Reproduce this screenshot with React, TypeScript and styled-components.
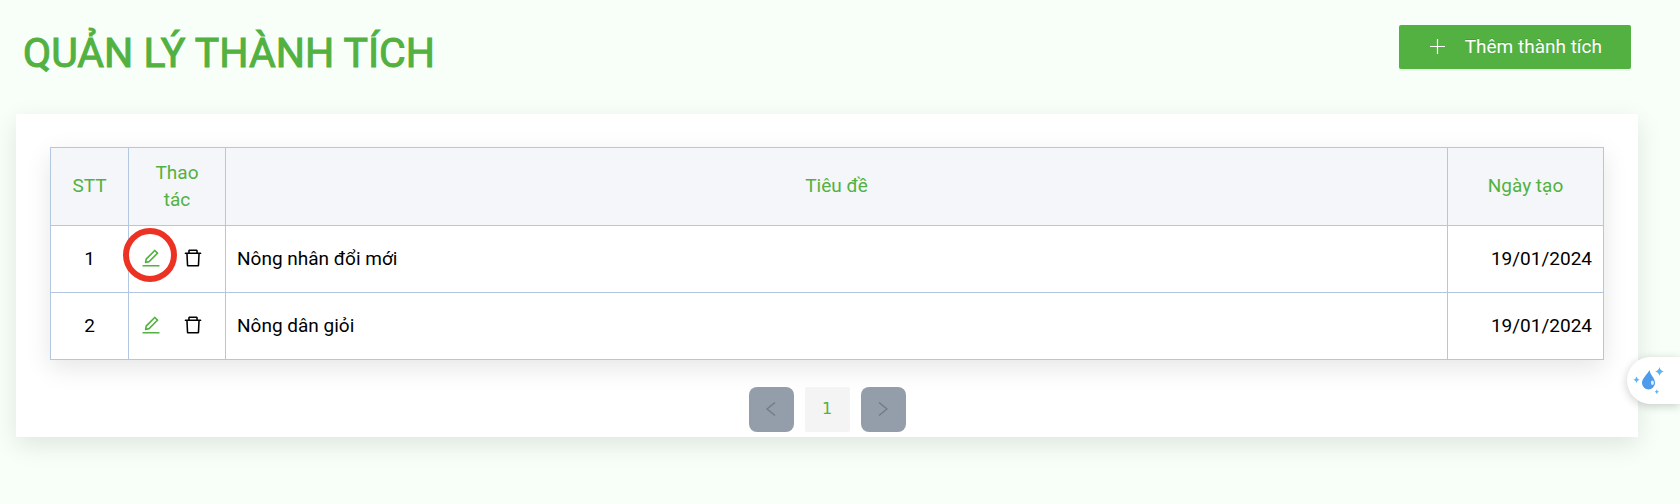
import React from "react";
import styled, { createGlobalStyle } from "styled-components";
import { AiOutlineDelete, AiOutlineEdit } from "react-icons/ai";

const green = "#52b141";
const line = "#b4c7e0";

const GlobalStyle = createGlobalStyle`
  *, *::before, *::after { box-sizing: border-box; }
  html { background: #f8fff9; }
  body {
    margin: 0;
    font-family: Roboto, "Liberation Sans", sans-serif;
    font-size: 19px;
    line-height: 27px;
    color: #000;
  }
  button { font: inherit; cursor: pointer; }
`;

const Page = styled.main`
  padding: 25px 42px 66px 16px;
`;

const Header = styled.header`
  display: flex;
  justify-content: space-between;
  align-items: flex-start;
  padding: 0 7px;
  margin-bottom: 33px;
`;

const Title = styled.h1`
  margin: 0;
  font-size: 41px;
  line-height: 56px;
  font-weight: 400;
  color: ${green};
  -webkit-text-stroke: 1px ${green};
`;

const AddButton = styled.button`
  display: flex;
  align-items: center;
  gap: 20px;
  height: 44px;
  padding: 0 29px 1px 31px;
  border: 0;
  border-radius: 2px;
  background: ${green};
  color: #fff;
  box-shadow: 0 2px 0 rgba(0, 0, 0, 0.05);
  text-shadow: 0 -1px 0 rgba(0, 0, 0, 0.12);
  white-space: nowrap;
`;

const Card = styled.section`
  padding: 33px 34px 5px;
  background: #fff;
  box-shadow: 0 8px 24px rgba(0, 0, 0, 0.1);
`;

const Table = styled.table`
  width: 100%;
  table-layout: fixed;
  border-collapse: collapse;
  background: #fff;
  box-shadow: 0 8px 24px rgba(0, 0, 0, 0.1);
`;

const Col = styled.col<{ $width?: number }>`
  width: ${(p) => (p.$width ? `${p.$width}px` : "auto")};
`;

const HeadCell = styled.th`
  height: 78px;
  padding: 10px 16px 12px;
  border: 1px solid ${line};
  background: #f4f6fa;
  color: ${green};
  font-weight: 400;
  text-align: center;
`;

const Cell = styled.td<{ $align?: "left" | "center" | "right" }>`
  height: 67px;
  padding: 0 11px 2px;
  border: 1px solid ${line};
  text-align: ${(p) => p.$align ?? "left"};
`;

const Actions = styled.div`
  display: flex;
  align-items: center;
  gap: 20px;
`;

const IconButton = styled.button<{ $tone: string }>`
  position: relative;
  display: flex;
  padding: 0;
  border: 0;
  background: none;
  color: ${(p) => p.$tone};
`;

const Ring = styled.span`
  position: absolute;
  left: 50%;
  top: 50%;
  width: 54px;
  height: 54px;
  margin: -30px 0 0 -28px;
  border: 6px solid #ec3323;
  border-radius: 50%;
  pointer-events: none;
`;

const Pagination = styled.nav`
  display: flex;
  justify-content: center;
  gap: 11px;
  margin-top: 27px;
`;

const PageButton = styled.button<{ $current?: boolean }>`
  display: flex;
  align-items: center;
  justify-content: center;
  width: 45px;
  height: 45px;
  padding: 0 0 2px;
  border: 0;
  border-radius: ${(p) => (p.$current ? 2 : 8)}px;
  background: ${(p) => (p.$current ? "#f4f4f4" : "#949eab")};
  color: ${(p) => (p.$current ? green : "#707986")};
  font-family: "DejaVu Sans", sans-serif;
  font-size: 16px;
`;

const Assistant = styled.button`
  position: fixed;
  right: 0;
  top: 357px;
  display: flex;
  align-items: center;
  width: 53px;
  height: 47px;
  padding: 0 0 0 5px;
  border: 0;
  border-radius: 24px 0 0 24px;
  background: #fff;
  box-shadow: 0 2px 10px rgba(0, 0, 0, 0.2);
`;

const PlusIcon = () => (
  <svg width="15" height="15" viewBox="0 0 15 15" fill="none" stroke="currentColor" aria-hidden="true">
    <path d="M7.5 0v15M0 7.5h15" strokeWidth="1.2" />
  </svg>
);

const Chevron = ({ next = false }: { next?: boolean }) => (
  <svg width="10" height="14" viewBox="0 0 10 14" fill="none" stroke="currentColor" strokeWidth="1.3" aria-hidden="true">
    <path d={next ? "M1 0.5L9 7L1 13.5" : "M9 0.5L1 7L9 13.5"} />
  </svg>
);

const DropIcon = () => (
  <svg width="33" height="29" viewBox="0 0 33 29" aria-hidden="true">
    <path d="M17.6 4C18 9.2 23 11.5 23 17a6.5 6.5 0 0 1-13 0C10 12.5 14.8 9 17.6 4Z" fill="#4d9bea" />
    <ellipse cx="20.4" cy="16.8" rx="1.5" ry="2.3" fill="#dceeff" />
    <g fill="#5db3f5">
      <path d="M27.5 1q.8 3.7 4.5 4.5-3.7.8-4.5 4.5-.8-3.7-4.5-4.5 3.7-.8 4.5-4.5Z" />
      <path d="M4.5 10.5q.6 2.7 3.2 3.2-2.6.6-3.2 3.2-.6-2.6-3.2-3.2 2.6-.5 3.2-3.2Z" />
      <path d="M24.8 23.5q.5 1.8 2.2 2.2-1.7.5-2.2 2.2-.5-1.7-2.2-2.2 1.7-.4 2.2-2.2Z" />
    </g>
  </svg>
);

const achievements = [
  { id: 1, title: "Nông nhân đổi mới", created: "19/01/2024", marked: true },
  { id: 2, title: "Nông dân giỏi", created: "19/01/2024", marked: false },
];

export default function App() {
  return (
    <>
      <GlobalStyle />
      <Page>
        <Header>
          <Title>QUẢN LÝ THÀNH TÍCH</Title>
          <AddButton type="button">
            <PlusIcon />
            Thêm thành tích
          </AddButton>
        </Header>
        <Card>
          <Table>
            <colgroup>
              <Col $width={78} />
              <Col $width={97} />
              <Col />
              <Col $width={156} />
            </colgroup>
            <thead>
              <tr>
                <HeadCell scope="col">STT</HeadCell>
                <HeadCell scope="col">Thao tác</HeadCell>
                <HeadCell scope="col">Tiêu đề</HeadCell>
                <HeadCell scope="col">Ngày tạo</HeadCell>
              </tr>
            </thead>
            <tbody>
              {achievements.map((item) => (
                <tr key={item.id}>
                  <Cell $align="center">{item.id}</Cell>
                  <Cell>
                    <Actions>
                      <IconButton type="button" $tone={green} aria-label={`Sửa ${item.title}`}>
                        <AiOutlineEdit size={22} />
                        {item.marked && <Ring />}
                      </IconButton>
                      <IconButton type="button" $tone="#000" aria-label={`Xóa ${item.title}`}>
                        <AiOutlineDelete size={22} />
                      </IconButton>
                    </Actions>
                  </Cell>
                  <Cell>{item.title}</Cell>
                  <Cell $align="right">{item.created}</Cell>
                </tr>
              ))}
            </tbody>
          </Table>
          <Pagination aria-label="Phân trang">
            <PageButton type="button" aria-label="Trang trước">
              <Chevron />
            </PageButton>
            <PageButton type="button" $current aria-current="page">
              1
            </PageButton>
            <PageButton type="button" aria-label="Trang sau">
              <Chevron next />
            </PageButton>
          </Pagination>
        </Card>
      </Page>
      <Assistant type="button" aria-label="Trợ lý">
        <DropIcon />
      </Assistant>
    </>
  );
}
